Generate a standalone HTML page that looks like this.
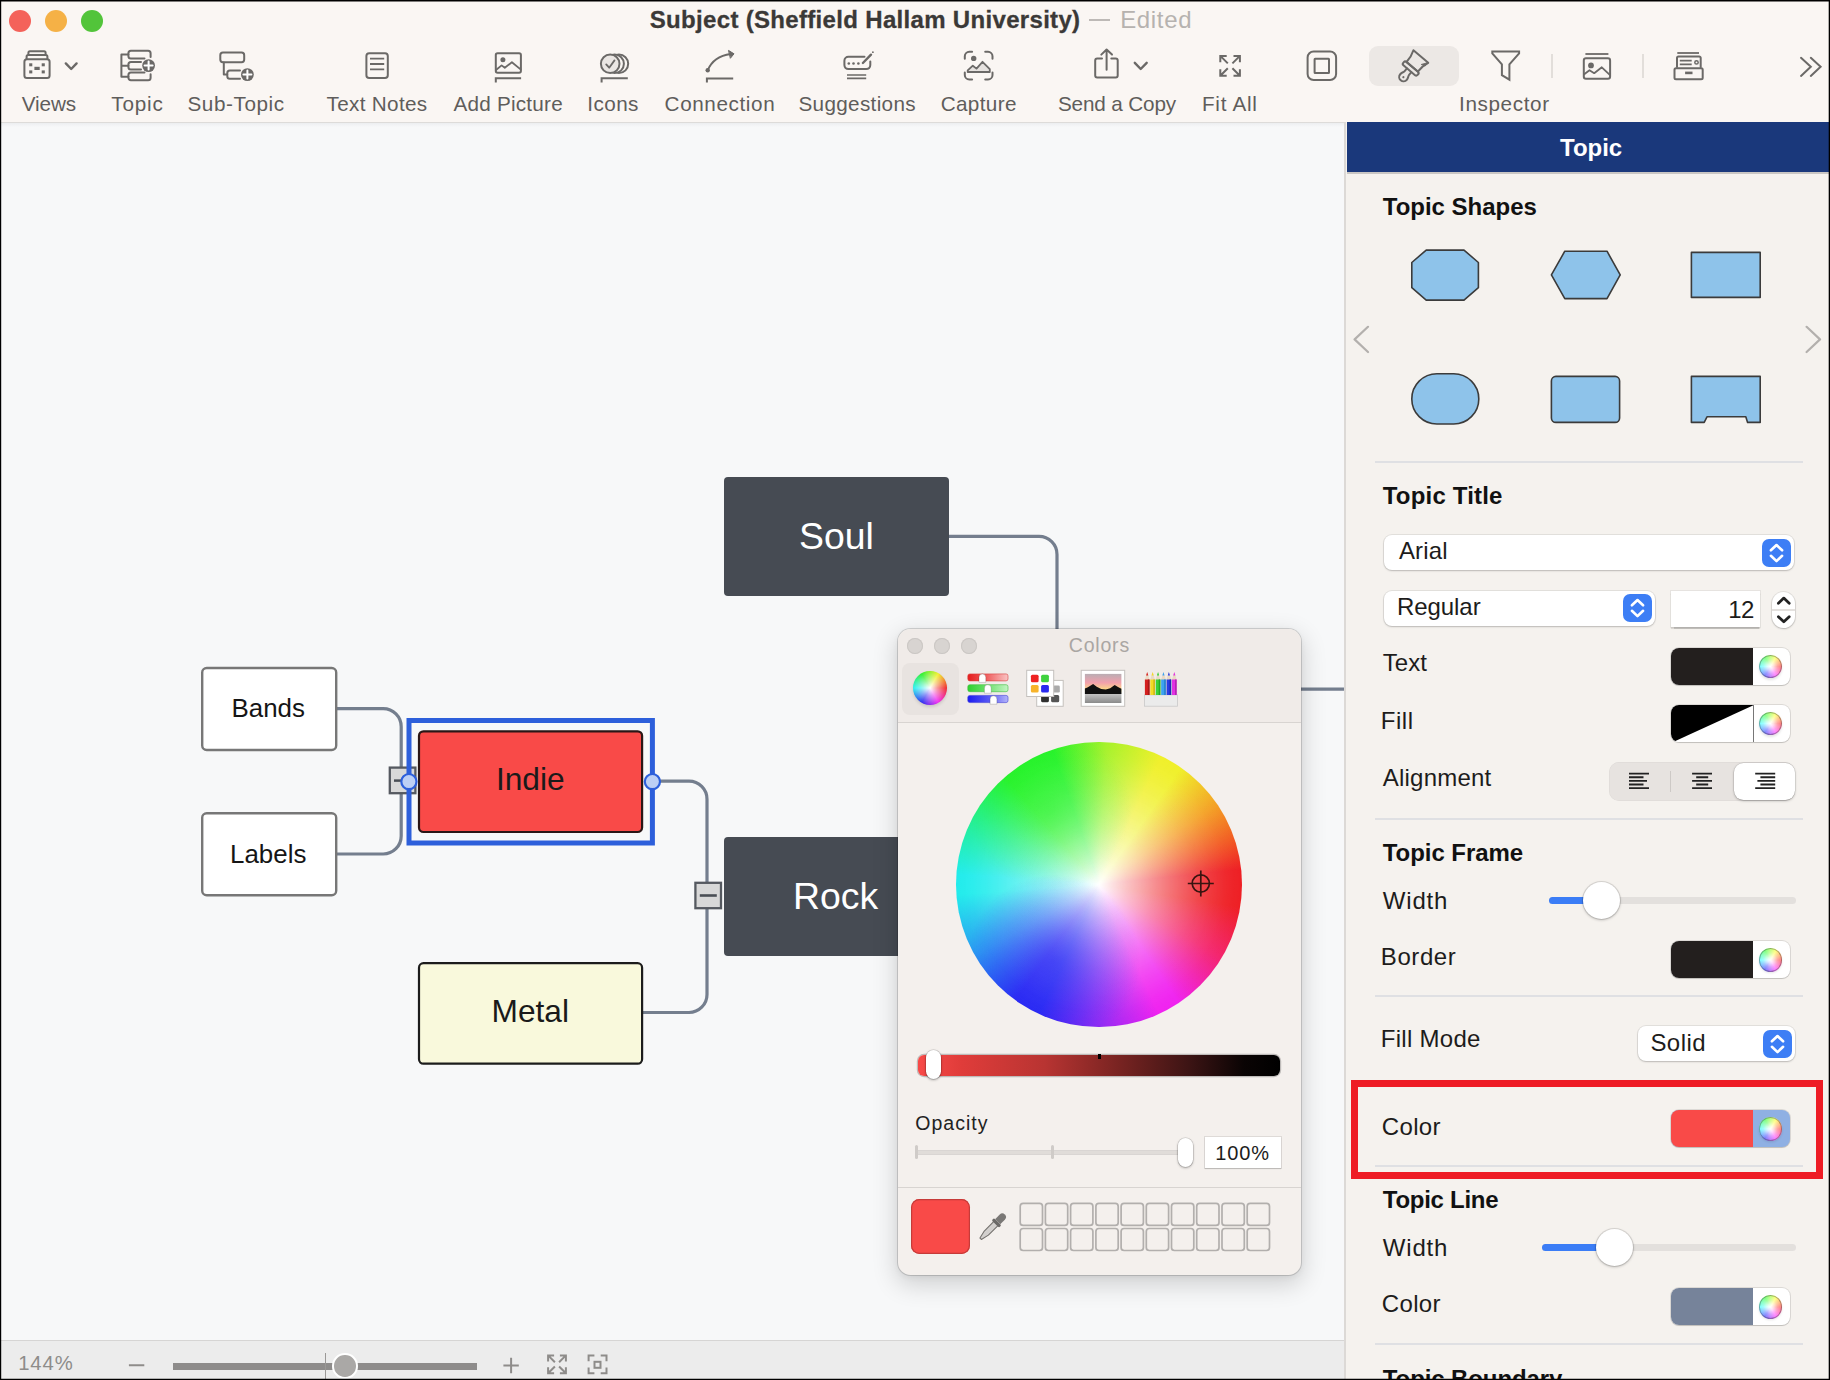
<!DOCTYPE html>
<html>
<head>
<meta charset="utf-8">
<title>Subject (Sheffield Hallam University)</title>
<style>
*{box-sizing:border-box;margin:0;padding:0}
html,body{width:1830px;height:1380px;overflow:hidden;background:#faf6f3}
body{font-family:"Liberation Sans",sans-serif;position:relative}
#app{position:absolute;left:0;top:0;width:1830px;height:1380px;overflow:hidden;background:#faf6f3}
.abs{position:absolute}
.t{position:absolute;white-space:nowrap;line-height:1}
/* toolbar */
#toolbar{position:absolute;left:0;top:0;width:1830px;height:122px;background:#faf6f3}
.tl{position:absolute;top:10px;width:22px;height:22px;border-radius:50%}
.tbl{position:absolute;white-space:nowrap;line-height:1;font-size:20.7px;color:#5f5d5b;top:93.600px}
.ico{position:absolute;overflow:visible}
.ico *{vector-effect:none}
/* canvas */
#canvas{position:absolute;left:0;top:122px;width:1344px;height:1218px;background:linear-gradient(#eceef0 0,#eceef0 1px,#f7f8f9 5px),#f7f8f9;overflow:hidden}
#status{position:absolute;left:0;top:1339.500px;width:1344px;height:41px;background:#ececec;border-top:1.500px solid #d6d5d4}
/* inspector */
#insp{position:absolute;left:1344px;top:122px;width:486px;height:1258px;background:#f5f2ee;border-left:2.200px solid #dcd9d6;overflow:hidden}
#insphead{position:absolute;left:0.500px;top:0;width:484px;height:50px;background:#1a387b}
.h{position:absolute;white-space:nowrap;line-height:1;font-weight:bold;font-size:23.5px;color:#111;left:1383px}
.l{position:absolute;white-space:nowrap;line-height:1;font-size:24px;color:#1d1c1b;left:1383px}
.sep{position:absolute;left:1375px;width:428px;height:2px;background:#dfe0e3}
.well{position:absolute;left:1671px;width:119.400px;height:37px;border-radius:8px;background:#fff;box-shadow:0 0 0 1px rgba(0,0,0,.10),0 1px 1px rgba(0,0,0,.12);overflow:hidden}
.well .c{position:absolute;left:0;top:0;width:82px;height:37px}
.well .w{position:absolute;left:87px;top:6px;width:24px;height:24px}
.dd{position:absolute;height:35px;border-radius:8px;background:#fff;box-shadow:0 0 0 1px rgba(0,0,0,.07),0 1px 2px rgba(0,0,0,.18)}
.dd .tx{position:absolute;left:15px;top:5px;font-size:24px;line-height:1;color:#1d1c1b;white-space:nowrap}
.dd .st{position:absolute;right:3px;top:4px;width:28px;height:27px;border-radius:6px;background:#3b7df6}
.track{position:absolute;height:7px;border-radius:4px;background:#e3e0dd}
.trackb{position:absolute;height:7px;border-radius:4px;background:#3b7df6}
.knob{position:absolute;width:37px;height:37px;border-radius:50%;background:#fff;box-shadow:0 0 0 1px rgba(0,0,0,.10),0 1px 3px rgba(0,0,0,.25)}
.wh{border-radius:50%;background:radial-gradient(circle closest-side,#fff 0%,rgba(255,255,255,.85) 25%,rgba(255,255,255,.55) 60%,rgba(255,255,255,.32) 100%),conic-gradient(from 90deg,#f33,#f3f,#33f,#3ff,#3f3,#ff3,#f33);box-shadow:inset 0 0 0 1px rgba(70,70,70,.42)}
/* popup */
#pop{position:absolute;left:897.700px;top:628.500px;width:403.800px;height:646.300px;border-radius:12.500px;background:#f4f0ed;box-shadow:0 0 0 1px rgba(0,0,0,.14),0 8px 24px 2px rgba(0,0,0,.16),0 2px 6px rgba(0,0,0,.06);overflow:hidden}
</style>
</head>
<body>
<div id="app">

<!-- TOOLBAR -->
<div id="toolbar">
  <div class="tl" style="left:9px;background:#f4625a"></div>
  <div class="tl" style="left:45px;background:#f5b146"></div>
  <div class="tl" style="left:81px;background:#52c43a"></div>
  <div class="t" id="title" style="-webkit-text-stroke:0.300px #3b3937;letter-spacing:0.32px;left:649.8px;top:7.8px;font-size:24px;font-weight:bold;color:#3b3937">Subject (Sheffield Hallam University)</div>
  <div class="t" id="title2" style="letter-spacing:0.65px;left:1120.2px;top:7.8px;font-size:24px;color:#b6b2af">Edited</div>
  <div class="abs" style="left:1089px;top:18.5px;width:20.5px;height:2.6px;background:#bdb9b6"></div>
  <div class="tbl" id="tb0" style="letter-spacing:-0.10px;left:21.8px">Views</div>
  <div class="tbl" id="tb1" style="letter-spacing:0.80px;left:111.3px">Topic</div>
  <div class="tbl" id="tb2" style="letter-spacing:0.57px;left:187.5px">Sub-Topic</div>
  <div class="tbl" id="tb3" style="letter-spacing:0.31px;left:326.6px">Text Notes</div>
  <div class="tbl" id="tb4" style="letter-spacing:0.22px;left:453.5px">Add Picture</div>
  <div class="tbl" id="tb5" style="letter-spacing:0.45px;left:587.2px">Icons</div>
  <div class="tbl" id="tb6" style="letter-spacing:0.60px;left:664.6px">Connection</div>
  <div class="tbl" id="tb7" style="letter-spacing:0.32px;left:798.5px">Suggestions</div>
  <div class="tbl" id="tb8" style="letter-spacing:0.36px;left:940.7px">Capture</div>
  <div class="tbl" id="tb9" style="letter-spacing:-0.14px;left:1057.9px">Send a Copy</div>
  <div class="tbl" id="tb10" style="letter-spacing:0.70px;left:1202.0px">Fit All</div>
  <div class="tbl" id="tb11" style="letter-spacing:0.63px;left:1459.0px">Inspector</div>
  <div class="abs" style="left:1368.5px;top:46px;width:90px;height:40px;border-radius:9px;background:#ece8e5"></div>
  <div class="abs" style="left:1550.5px;top:54px;width:2px;height:24px;background:#e2deda"></div>
  <div class="abs" style="left:1642px;top:54px;width:2px;height:24px;background:#e2deda"></div>
  <svg class="abs" style="left:0;top:0" width="1830" height="122" viewBox="0 0 1830 122" fill="none" stroke="#6b6967" stroke-width="2" stroke-linecap="round" stroke-linejoin="round">
    <!-- Views -->
    <rect x="24.4" y="59.3" width="25.2" height="18.8" rx="2.5"/>
    <path d="M26.6 58.8v-2.2a1.6 1.6 0 0 1 1.6-1.6h17.6a1.6 1.6 0 0 1 1.6 1.6v2.2"/>
    <path d="M28.4 54.6v-1.8a1.5 1.5 0 0 1 1.5-1.5h14.2a1.5 1.5 0 0 1 1.5 1.5v1.8"/>
    <g fill="#6b6967" stroke="none"><rect x="29.2" y="63.3" width="3.1" height="3"/><rect x="41.7" y="63.3" width="3.1" height="3"/><rect x="29.2" y="70.4" width="3.1" height="3"/><rect x="41.7" y="70.4" width="3.1" height="3"/><rect x="34.4" y="66.8" width="5.3" height="3.2"/></g>
    <path d="M65.8 63.4l5.4 5.6 5.4-5.6" stroke-width="2.4"/>
    <!-- Topic -->
    <path d="M128.4 54.5h-7v22.3h7M121.4 65.7h7"/>
    <path d="M144.5 58.4h-13.6a2.5 2.5 0 0 1-2.5-2.5v-2.6a2.5 2.5 0 0 1 2.5-2.5h17.2a2.5 2.5 0 0 1 2.5 2.5v3.6"/>
    <path d="M141 61.9h-10.100a2.500 2.500 0 0 0-2.500 2.500v2.600a2.500 2.500 0 0 0 2.500 2.500h10.100"/>
    <path d="M144.5 72.400h-13.600a2.500 2.500 0 0 0-2.500 2.500v2.900a2.500 2.500 0 0 0 2.500 2.500h17.200a2.500 2.500 0 0 0 2.500-2.500v-3.600"/>
    <circle cx="148.600" cy="65.600" r="6.400" fill="#6b6967" stroke="none"/>
    <path d="M148.600 61.600v8M144.600 65.600h8" stroke="#fff" stroke-width="2"/>
    <!-- Sub-Topic -->
    <rect x="220.300" y="52.600" width="23.900" height="9.600" rx="2.600"/>
    <path d="M223.800 62.400v12.200h3.400"/>
    <path d="M240 70.400h-10.200a2.500 2.500 0 0 0-2.500 2.500v3.300a2.500 2.500 0 0 0 2.500 2.500h10.200"/>
    <circle cx="247.400" cy="74.600" r="6.400" fill="#6b6967" stroke="none"/>
    <path d="M247.400 70.600v8M243.400 74.600h8" stroke="#fff" stroke-width="2"/>
    <!-- Text Notes -->
    <rect x="366.400" y="53.300" width="21.400" height="24.700" rx="2.800"/>
    <path d="M370 58.600h14.200M370 64h14.200M370 69.400h14.200" stroke-width="1.800" stroke-linecap="butt"/>
    <!-- Add Picture -->
    <rect x="495.800" y="53.300" width="25.100" height="19.500" rx="1.800"/>
    <circle cx="502.900" cy="59.800" r="2.500" fill="#6b6967" stroke="none"/>
    <path d="M496.300 69.800l5.300-4.400 3.200 2.400 7.100-5.600 8.700 7.200" stroke-width="1.800"/>
    <path d="M495.800 82.400v-4.200h25.300" stroke-linecap="butt" stroke-linejoin="miter"/>
    <!-- Icons -->
    <circle cx="618.900" cy="63.800" r="9.300"/>
    <circle cx="614.600" cy="63.800" r="9.300" fill="#faf6f3"/>
    <circle cx="610.200" cy="63.800" r="9.300" fill="#eae6e3"/>
    <path d="M606.200 64.400l3 3.300 5.300-7.300" stroke-width="1.800"/>
    <path d="M601.600 82.400v-4.200h26.200" stroke-linecap="butt" stroke-linejoin="miter"/>
    <!-- Connection -->
    <circle cx="707.700" cy="70.300" r="2.200" fill="#6b6967" stroke="none"/>
    <path d="M707.700 70.300c3.500-8.500 10-14.500 23-16.300"/>
    <path d="M728.800 50.600l5.200 3.200-3.400 4.200z" fill="#6b6967" stroke-width="1"/>
    <path d="M706.900 82.600v-4.200h26.300" stroke-linecap="butt" stroke-linejoin="miter"/>
    <!-- Suggestions -->
    <path d="M864.500 56.700h-16.100a4 4 0 0 0-4 4v4.400a4 4 0 0 0 4 4h17.900a4 4 0 0 0 4-4v-3.600"/>
    <g fill="#6b6967" stroke="none"><circle cx="848.800" cy="63.500" r="1.300"/><circle cx="853.500" cy="63.500" r="1.300"/><circle cx="858.400" cy="63.500" r="1.300"/></g>
    <path d="M862.900 63l8.100-8.300" stroke-width="2.400"/>
    <circle cx="872.900" cy="52.200" r="0.900" fill="#6b6967" stroke="none"/>
    <path d="M847 75h19.200M847 78.400h19.200" stroke-width="1.700" stroke-linecap="butt"/>
    <!-- Capture -->
    <path d="M964.800 58.800v-2.500a4.500 4.500 0 0 1 4.500-4.500h2.800M985.200 51.800h2.800a4.500 4.500 0 0 1 4.500 4.500v2.500M992.500 72.400v2.500a4.500 4.500 0 0 1-4.500 4.500h-2.800M972.100 79.400h-2.800a4.500 4.500 0 0 1-4.500-4.500v-2.500"/>
    <circle cx="973.700" cy="58.400" r="2.700" fill="#6b6967" stroke="none"/>
    <path d="M967.700 72v-1.600l5.100-4.700 3.700 2.900 6-6.800 7.300 7.400v2.800z" fill="#e6e2df" stroke-width="1.800"/>
    <!-- Send a copy -->
    <path d="M1102 58.500h-4.800a2 2 0 0 0-2 2v15.100a2 2 0 0 0 2 2h18.500a2 2 0 0 0 2-2v-15.100a2 2 0 0 0-2-2h-4.400"/>
    <path d="M1106.600 69.800v-19.800M1101.300 54.600l5.300-5.100 5.400 5.100"/>
    <path d="M1134.800 62.800l5.900 6.200 6-6.200" stroke-width="2.400"/>
    <!-- Fit All -->
    <g stroke-linecap="butt" stroke-linejoin="miter">
    <path d="M1220.300 62.300v-6.400h6.400M1220.800 56.400l7 7"/>
    <path d="M1233.500 55.900h6.400v6.400M1239.400 56.400l-7 7"/>
    <path d="M1239.900 69.300v6.400h-6.400M1239.400 75.200l-7-7"/>
    <path d="M1226.700 75.700h-6.400v-6.400M1220.800 75.200l7-7"/>
    </g>
    <!-- Square -->
    <rect x="1307.600" y="51.500" width="28.500" height="28.500" rx="6"/>
    <rect x="1314.600" y="58.800" width="14.400" height="14.200" rx="0.500"/>
    <!-- Brush -->
    <g transform="translate(1410.800 68.400) rotate(40.300)">
      <path d="M-7.400 -2.100c0.300-4.800-0.400-8.800-2.300-13.400h19.400c-1.900 4.600-2.600 8.600-2.300 13.400z"/>
      <rect x="-9.400" y="-2.100" width="18.800" height="4.500" rx="1.800"/>
      <path d="M-2.900 2.500v3.600c0 1.600-1.400 2.500-1.400 5.200a4.300 4.300 0 0 0 8.600 0c0-2.700-1.400-3.600-1.400-5.200v-3.600"/>
      <circle cx="0" cy="11.500" r="1.100" fill="#6b6967" stroke="none"/>
      <path d="M8.600 -14.500l-3.200 4.800 3.600-1.300z" fill="#6b6967" stroke-width="0.800"/>
    </g>
    <!-- Funnel -->
    <path d="M1492.300 51.400h26.800v2l-9.700 10.900v15.400l-7.500-4.600v-10.800l-9.600-10.900z" stroke-linejoin="miter"/>
    <!-- Image -->
    <path d="M1585.400 54h23" stroke-linecap="butt" stroke-width="1.800"/>
    <rect x="1583.800" y="58.200" width="26.300" height="20.500" rx="2.200"/>
    <circle cx="1591" cy="65.400" r="2.900" fill="#6b6967" stroke="none"/>
    <path d="M1584.200 74.300l5.300-4.100 4.700 3 7.600-5.900 8 7.600" stroke-width="1.800"/>
    <!-- Drawer -->
    <path d="M1677.300 53h21.700" stroke-linecap="butt" stroke-width="1.800"/>
    <path d="M1677 67v-8.900a1.500 1.500 0 0 1 1.500-1.500h20.700a1.500 1.500 0 0 1 1.500 1.500v8.900"/>
    <path d="M1679.800 60.700h11.900M1679.800 64.300h11.900" stroke-width="1.700" stroke-linecap="butt"/>
    <circle cx="1696.500" cy="62.400" r="1.700" stroke-width="1.500"/>
    <rect x="1674.500" y="68.300" width="28.200" height="11" rx="1.500"/>
    <path d="M1685.100 72.900h7.400" stroke-width="2.600" stroke-linecap="butt"/>
    <!-- >> -->
    <path d="M1801 57.800l9.800 8.900-9.800 9.200M1810.800 57.800l9.800 8.900-9.800 9.200" stroke-linejoin="miter"/>
  </svg>
</div>

<!-- CANVAS -->
<div id="canvas">
<svg class="abs" style="left:0;top:0" width="1345" height="1218" viewBox="0 122 1345 1218" fill="none">
<g stroke="#747e8e" stroke-width="3.200" fill="none" stroke-linecap="butt">
<path d="M337 708.700h46.200a18 18 0 0 1 18 18v109.300a18 18 0 0 1-18 18h-46.200"/>
<path d="M653 781.200h36a18 18 0 0 1 18 18v195.300a18 18 0 0 1-18 18h-46"/>
<path d="M949 536.400h90a18 18 0 0 1 18 18v80"/>
<path d="M1295 689.200h50"/>
</g>
<!-- collapse buttons -->
<rect x="389.800" y="767.600" width="25.600" height="25.600" fill="#d8d8d8" stroke="#555960" stroke-width="2.300"/>
<path d="M394 780.600h8" stroke="#4a4e55" stroke-width="2.500"/>
<rect x="695.400" y="882.800" width="25.600" height="25.400" fill="#d8d8d8" stroke="#555960" stroke-width="2.300"/>
<path d="M699.800 895.500h17" stroke="#4a4e55" stroke-width="2.600"/>
<!-- nodes -->
<rect x="724" y="477" width="225" height="119" rx="4" fill="#464b53"/>
<rect x="724" y="837" width="225" height="119" rx="4" fill="#464b53"/>
<rect x="202.200" y="668" width="134" height="82" rx="4.500" fill="#fff" stroke="#777" stroke-width="2.400"/>
<rect x="202.200" y="813.200" width="134" height="82" rx="4.500" fill="#fff" stroke="#777" stroke-width="2.400"/>
<rect x="409" y="720.500" width="243.400" height="122.500" fill="none" stroke="#2d5fdb" stroke-width="5"/>
<rect x="419" y="731.300" width="223.100" height="100.700" rx="4.500" fill="#f94a48" stroke="#2a1616" stroke-width="2.200"/>
<rect x="419" y="963.200" width="223.100" height="100.500" rx="4.500" fill="#f9f9dc" stroke="#1c1c1c" stroke-width="2.200"/>
<circle cx="408.900" cy="781.600" r="7.600" fill="#bccff5" stroke="#2d5fdb" stroke-width="2.200"/>
<circle cx="652.400" cy="781.600" r="7.600" fill="#bccff5" stroke="#2d5fdb" stroke-width="2.200"/>
</svg>
<div class="t" id="n0" style="left:724px;width:225px;text-align:center;top:395.7px;font-size:37.4px;color:#fff">Soul</div>
<div class="t" id="n1" style="left:723.0px;width:225px;text-align:center;top:755.7px;font-size:37.4px;color:#fff">Rock</div>
<div class="t" id="n2" style="left:200.2px;width:136px;text-align:center;top:573.8px;font-size:25.9px;color:#151515">Bands</div>
<div class="t" id="n3" style="left:200.2px;width:136px;text-align:center;top:719.7px;font-size:25.9px;color:#151515">Labels</div>
<div class="t" id="n4" style="left:417.8px;width:225px;text-align:center;top:642.4px;font-size:31.7px;color:#1a1a1a">Indie</div>
<div class="t" id="n5" style="left:417.8px;width:225px;text-align:center;top:874.3px;font-size:31.7px;color:#1a1a1a">Metal</div>
</div>
<div class="abs" style="left:0;top:122px;width:1344px;height:1px;background:#dddbd9"></div>
<div id="status">
<div class="abs" style="left:0;top:-1339.500px;width:1345px;height:1380px">
<div class="t" id="sz" style="letter-spacing:0.90px;left:18.2px;top:1352.4px;font-size:20.3px;color:#8e8c8a">144%</div>
<div class="abs" style="left:172.800px;top:1362.100px;width:304px;height:6.700px;background:#8e8c8b"></div>
<div class="abs" style="left:325.300px;top:1352px;width:1.200px;height:28px;background:#9a9896"></div>
<div class="abs" style="left:332.100px;top:1352.400px;width:25.600px;height:25.600px;border-radius:50%;background:#aaa8a6;border:2px solid #fff"></div>
<svg class="abs" style="left:120px;top:1345px" width="500" height="35" viewBox="120 1345 500 35" fill="none" stroke="#8e8c8a" stroke-width="2">
<path d="M128.900 1364.300h15.400M503.400 1364.500h15.400M511.100 1356.800v15.400"/>
<g stroke-linecap="butt" stroke-linejoin="miter">
<path d="M548.100 1360.400v-6h6M548.600 1354.900l6.300 6.300"/>
<path d="M559.900 1354.400h6v6M565.400 1354.900l-6.300 6.300"/>
<path d="M565.900 1366.300v6h-6M565.400 1371.800l-6.300-6.300"/>
<path d="M554.100 1372.300h-6v-6M548.600 1371.800l6.300-6.300"/>
<path d="M588.600 1360.200v-5.800h5.800M600.700 1354.400h5.800v5.800M606.500 1366.500v5.800h-5.800M594.400 1372.300h-5.800v-5.800"/>
<rect x="594.500" y="1360.800" width="6" height="6"/>
</g>
</svg>
</div>
</div>

<!-- INSPECTOR -->
<div id="insp">
  <div id="insphead"></div>
</div>
<div class="t" id="ih" style="letter-spacing:0.00px;left:1560.0px;top:135.7px;font-size:24px;font-weight:bold;color:#fff">Topic</div>
<div class="abs" style="left:1347px;top:172px;width:483px;height:2px;background:#c9c6c3"></div>
<div class="h" id="hh0" style="letter-spacing:-0.02px;left:1382.8px;top:194.7px;font-size:24px">Topic Shapes</div>
<div class="h" id="hh1" style="letter-spacing:0.18px;left:1382.8px;top:483.9px;font-size:24px">Topic Title</div>
<div class="h" id="hh2" style="letter-spacing:-0.06px;left:1382.8px;top:840.6px;font-size:24px">Topic Frame</div>
<div class="h" id="hh3" style="letter-spacing:-0.27px;left:1382.8px;top:1187.6px;font-size:24px">Topic Line</div>
<div class="h" id="hh4" style="letter-spacing:-0.10px;left:1382.8px;top:1366.7px;font-size:24px">Topic Boundary</div>
<div class="l" id="ll0" style="letter-spacing:0.07px;left:1382.8px;top:651.2px">Text</div>
<div class="l" id="ll1" style="letter-spacing:0.53px;left:1380.8px;top:708.7px">Fill</div>
<div class="l" id="ll2" style="letter-spacing:0.21px;left:1382.8px;top:766.3px">Alignment</div>
<div class="l" id="ll3" style="letter-spacing:0.80px;left:1382.8px;top:889.3px">Width</div>
<div class="l" id="ll4" style="letter-spacing:0.58px;left:1380.8px;top:945px">Border</div>
<div class="l" id="ll5" style="letter-spacing:0.28px;left:1380.8px;top:1027.4px">Fill Mode</div>
<div class="l" id="ll6" style="letter-spacing:0.35px;left:1381.8px;top:1115.3px">Color</div>
<div class="l" id="ll7" style="letter-spacing:0.80px;left:1382.8px;top:1236.3px">Width</div>
<div class="l" id="ll8" style="letter-spacing:0.35px;left:1381.8px;top:1292px">Color</div>
<div class="sep" style="top:461.2px"></div>
<div class="sep" style="top:817.8px"></div>
<div class="sep" style="top:995px"></div>
<div class="sep" style="top:1164.6px"></div>
<div class="sep" style="top:1342.6px"></div>
<svg class="abs" style="left:1346px;top:174px" width="484" height="290" viewBox="1346 174 484 290" fill="#8ec3ea" stroke="#3b3b3b" stroke-width="1.600" stroke-linejoin="round">
<path d="M1426.200 250.100h37.800l14.400 12.400v25.200l-14.400 12.400h-37.800l-14.400-12.400v-25.200z"/>
<path d="M1564.800 251.200h42.200l13.200 23.700-13.200 23.700h-42.200l-13.400-23.700z"/>
<rect x="1691.400" y="252.400" width="68.800" height="45"/>
<rect x="1411.800" y="373.800" width="67" height="50.200" rx="25.100"/>
<rect x="1551.400" y="376.400" width="68.200" height="46" rx="4.500"/>
<path d="M1691.400 376.400h68.800v46h-12.600l-1.800-5.600h-38.800l-2.800 5.600h-12.800z"/>
<path d="M1368 326.800l-13.400 12.600 13.400 12.600M1806.600 326.800l13.400 12.600-13.400 12.600" fill="none" stroke="#b3b0ad" stroke-width="2.200" stroke-linecap="round"/>
</svg>
<div class="dd" style="left:1383.5px;top:535px;width:410.500px"></div><svg class="abs" style="left:1761.5px;top:538.7px" width="29" height="28" viewBox="0 0 29 28"><rect x="0" y="0" width="29" height="28" rx="7" fill="#3d7ef5"/><path d="M8.900 11.300l5.600-5.300 5.600 5.300M8.900 16.800l5.600 5.300 5.600-5.300" fill="none" stroke="#fff" stroke-width="2.600" stroke-linecap="round" stroke-linejoin="round"/></svg>
<div class="t" id="d0" style="letter-spacing:0.17px;left:1398.9px;top:539.3px;font-size:24px;color:#1d1c1b">Arial</div>
<div class="dd" style="left:1383.5px;top:591px;width:271.700px"></div><svg class="abs" style="left:1623px;top:594.2px" width="29" height="28" viewBox="0 0 29 28"><rect x="0" y="0" width="29" height="28" rx="7" fill="#3d7ef5"/><path d="M8.900 11.300l5.600-5.300 5.600 5.300M8.900 16.800l5.600 5.300 5.600-5.300" fill="none" stroke="#fff" stroke-width="2.600" stroke-linecap="round" stroke-linejoin="round"/></svg>
<div class="t" id="d1" style="letter-spacing:-0.05px;left:1396.9px;top:595px;font-size:24px;color:#1d1c1b">Regular</div>
<div class="abs" style="left:1671.200px;top:590.600px;width:88.800px;height:36.700px;background:#fff;box-shadow:0 0 0 1px rgba(0,0,0,.06),0 1.500px 1px rgba(0,0,0,.22)"></div>
<div class="t" id="d2" style="letter-spacing:-0.60px;left:1728.2px;top:597.7px;font-size:24px;color:#1d1c1b">12</div>
<div class="abs" style="left:1771.700px;top:591.800px;width:23.800px;height:36px;border-radius:12px;background:#fff;box-shadow:0 0 0 1px rgba(0,0,0,.07),0 1px 2px rgba(0,0,0,.2)"></div>
<div class="abs" style="left:1771.700px;top:609px;width:23.800px;height:1.500px;background:#e4e1de"></div>
<svg class="abs" style="left:1771px;top:591px" width="26" height="38" viewBox="1771 591 26 38" fill="none" stroke="#222" stroke-width="2.800" stroke-linecap="round" stroke-linejoin="round"><path d="M1778.400 603.200l5.400-5.100 5.400 5.100M1778.400 616.700l5.400 5.100 5.400-5.100"/></svg>
<div class="well" style="top:648.0px;background:#fff"><div class="c" style="background:#231f1e"></div></div><div class="abs" style="left:1758.5px;top:656.4px;width:23.6px;height:23.6px;border-radius:50%;background:rgba(0,0,0,.10);filter:blur(1.2px)"></div><div class="abs wh" style="left:1758.5px;top:654.9px;width:23.6px;height:23.6px"></div>
<div class="well" style="top:705.0px;background:#fff"><div class="c" style="background:#fff"><svg width="83" height="38" viewBox="0 0 83 38" style="position:absolute;left:0;top:0"><path d="M0 0h83L0 38z" fill="#000"/><path d="M82.500 0v38" stroke="#777" stroke-width="1"/></svg></div></div><div class="abs" style="left:1758.5px;top:713.4px;width:23.6px;height:23.6px;border-radius:50%;background:rgba(0,0,0,.10);filter:blur(1.2px)"></div><div class="abs wh" style="left:1758.5px;top:711.9px;width:23.6px;height:23.6px"></div>
<div class="well" style="top:941.2px;background:#fff"><div class="c" style="background:#231f1e"></div></div><div class="abs" style="left:1758.5px;top:949.6px;width:23.6px;height:23.6px;border-radius:50%;background:rgba(0,0,0,.10);filter:blur(1.2px)"></div><div class="abs wh" style="left:1758.5px;top:948.1px;width:23.6px;height:23.6px"></div>
<div class="well" style="top:1110.2px;background:#8fb0e3"><div class="c" style="background:#f94a48"></div></div><div class="abs" style="left:1758.5px;top:1118.6px;width:23.6px;height:23.6px;border-radius:50%;background:rgba(0,0,0,.10);filter:blur(1.2px)"></div><div class="abs wh" style="left:1758.5px;top:1117.1px;width:23.6px;height:23.6px"></div>
<div class="well" style="top:1288.2px;background:#fff"><div class="c" style="background:#76839a"></div></div><div class="abs" style="left:1758.5px;top:1296.6px;width:23.6px;height:23.6px;border-radius:50%;background:rgba(0,0,0,.10);filter:blur(1.2px)"></div><div class="abs wh" style="left:1758.5px;top:1295.1px;width:23.6px;height:23.6px"></div>
<div class="abs" style="left:1608.700px;top:762px;width:186px;height:39.400px;border-radius:10px;background:#e7e3e0;box-shadow:inset 0 0 0 0.500px rgba(0,0,0,.05)"></div>
<div class="abs" style="left:1734.200px;top:763.200px;width:60.400px;height:37px;border-radius:9.500px;background:#fff;box-shadow:0 0 0 0.500px rgba(0,0,0,.12),0 1px 2.500px rgba(0,0,0,.28)"></div>
<div class="abs" style="left:1670.200px;top:771px;width:1.200px;height:21px;background:#cdc9c6"></div>
<svg class="abs" style="left:1600px;top:760px" width="200" height="44" viewBox="1600 760 200 44" stroke="#222" stroke-width="1.900" fill="none"><path d="M1629 773.6H1649M1629 777.2H1643.5M1629 780.9H1647M1629 784.5H1643.5M1629 788.1H1649M1692.1 773.6H1712M1696.2 777.2H1708.2M1692.1 780.9H1712M1696.2 784.5H1708.2M1692.1 788.1H1712M1755.2 773.6H1775.2M1760.4 777.2H1775.2M1757.4 780.9H1775.2M1760.4 784.5H1775.2M1755.2 788.1H1775.2"/></svg>
<div class="track" style="left:1548.8px;top:897.1px;width:246.9px"></div><div class="trackb" style="left:1548.8px;top:897.1px;width:53.0px"></div><div class="knob" style="left:1583.4px;top:882.1px"></div>
<div class="track" style="left:1542.1px;top:1244.1px;width:253.6px"></div><div class="trackb" style="left:1542.1px;top:1244.1px;width:72.7px"></div><div class="knob" style="left:1596.4px;top:1229.1px"></div>
<div class="dd" style="left:1637.500px;top:1026.300px;width:157.700px"></div><svg class="abs" style="left:1763px;top:1029.6px" width="29" height="28" viewBox="0 0 29 28"><rect x="0" y="0" width="29" height="28" rx="7" fill="#3d7ef5"/><path d="M8.900 11.300l5.600-5.300 5.600 5.300M8.900 16.800l5.600 5.300 5.600-5.300" fill="none" stroke="#fff" stroke-width="2.600" stroke-linecap="round" stroke-linejoin="round"/></svg>
<div class="t" id="d3" style="letter-spacing:0.47px;left:1650.4px;top:1030.7px;font-size:24px;color:#1d1c1b">Solid</div>
<div class="abs" style="left:1351.200px;top:1080.300px;width:472px;height:99px;border:7.600px solid #ee1c25"></div>

<!-- POPUP -->
<div id="pop">
<div class="abs" style="left:-897.700px;top:-628.500px;width:1830px;height:1380px">
<div class="abs" style="left:897px;top:628px;width:406px;height:94.300px;background:#f0ebe8"></div>
<div class="abs" style="left:897px;top:721.600px;width:406px;height:1.600px;background:#d8d4d1"></div>
<div class="abs" style="left:906.7px;top:637.5px;width:16.400px;height:16.400px;border-radius:50%;background:#d8d4d1;box-shadow:inset 0 0 0 1px #cbc7c4"></div>
<div class="abs" style="left:933.7px;top:637.5px;width:16.400px;height:16.400px;border-radius:50%;background:#d8d4d1;box-shadow:inset 0 0 0 1px #cbc7c4"></div>
<div class="abs" style="left:960.8px;top:637.5px;width:16.400px;height:16.400px;border-radius:50%;background:#d8d4d1;box-shadow:inset 0 0 0 1px #cbc7c4"></div>
<div class="t" id="pt" style="letter-spacing:0.80px;left:1068.8px;top:635.7px;font-size:19.5px;color:#aaa6a3">Colors</div>
<div class="abs" style="left:901.700px;top:662.900px;width:57.400px;height:52.400px;border-radius:8px;background:#e8e3e0"></div>
<div class="abs" style="left:913.200px;top:672.600px;width:34px;height:34px;border-radius:50%;background:rgba(0,0,0,.12);filter:blur(1.500px)"></div>
<div class="abs" style="left:912.700px;top:670.600px;width:34.800px;height:34.800px;border-radius:50%;background:radial-gradient(circle closest-side,#fff 0%,rgba(255,255,255,.5) 45%,rgba(255,255,255,0) 100%),conic-gradient(from 90deg,#f02a2a,#f02af0,#2a2af0,#2af0f0,#2af02a,#f0f02a,#f02a2a)"></div>
<svg class="abs" style="left:960px;top:664px" width="230" height="50" viewBox="960 664 230 50">
<defs>
<linearGradient id="gr" x1="0" x2="1"><stop offset="0" stop-color="#e51c1c"/><stop offset=".45" stop-color="#ef5a5a"/><stop offset="1" stop-color="#f9c4c4"/></linearGradient>
<linearGradient id="gg" x1="0" x2="1"><stop offset="0" stop-color="#2fd02f"/><stop offset=".5" stop-color="#6fe06f"/><stop offset="1" stop-color="#c4f4c4"/></linearGradient>
<linearGradient id="gb" x1="0" x2="1"><stop offset="0" stop-color="#1c1cf0"/><stop offset=".55" stop-color="#5a5af4"/><stop offset="1" stop-color="#b4b4fa"/></linearGradient>
<linearGradient id="sky" x1="0" y1="0" x2="0" y2="1"><stop offset="0" stop-color="#b9aeb4"/><stop offset=".3" stop-color="#f2a0ac"/><stop offset=".52" stop-color="#fbd58a"/><stop offset=".6" stop-color="#f6e9a0"/><stop offset=".66" stop-color="#c9c9c9"/><stop offset="1" stop-color="#8a8a8a"/></linearGradient>
</defs>
<rect x="967.800" y="673.900" width="40.200" height="7" rx="2" fill="url(#gr)" stroke="#d84040" stroke-width=".6"/>
<rect x="967.800" y="684.700" width="40.200" height="7" rx="2" fill="url(#gg)" stroke="#40c040" stroke-width=".6"/>
<rect x="967.800" y="695.400" width="40.200" height="7.200" rx="2" fill="url(#gb)" stroke="#4040d8" stroke-width=".6"/>
<g fill="#fff" stroke="rgba(0,0,0,.25)" stroke-width=".7">
<path d="M979 682.400v-5a3.400 3.400 0 0 1 6.800 0v5z"/>
<path d="M984.400 693.200v-5a3.400 3.400 0 0 1 6.800 0v5z"/>
<path d="M990.100 704.200v-5a3.400 3.400 0 0 1 6.800 0v5z"/>
</g>
<!-- palette -->
<rect x="1036.700" y="680.400" width="26.500" height="25.900" fill="#fff" stroke="#c4c0bd" stroke-width="1"/>
<rect x="1053.200" y="685.600" width="6.600" height="7" rx="1.300" fill="#aaa"/>
<rect x="1041.100" y="694.900" width="7.800" height="7.300" rx="1.500" fill="#303030"/>
<rect x="1051.100" y="694.900" width="8.100" height="7.300" rx="1.500" fill="#555"/>
<rect x="1026.700" y="670.300" width="27" height="26.200" fill="#fff" stroke="#c4c0bd" stroke-width="1"/>
<rect x="1030.900" y="674.700" width="7.700" height="7.500" rx="1.500" fill="#ee2222"/>
<rect x="1041.100" y="674.700" width="7.800" height="7.500" rx="1.500" fill="#3fd23f"/>
<rect x="1030.900" y="685" width="7.700" height="7.400" rx="1.500" fill="#f7b32a"/>
<rect x="1041.100" y="685" width="7.800" height="7.400" rx="1.500" fill="#2a2af0"/>
<!-- image -->
<rect x="1081.200" y="670.300" width="43.500" height="36" fill="#fff" stroke="#c4c0bd" stroke-width="1"/>
<rect x="1084.900" y="673.900" width="36.500" height="29.100" fill="url(#sky)"/>
<path d="M1084.900 694v-5.500l3-1.200 5.200-3.300 3.600 2.700 4.500 2.300 4.600 0.600 4.400-1.400 4.500-3.100 3.300 1.900 3.400 1.800v5.200z" fill="#111"/>
<!-- pencils -->
<g>
<rect x="1144.400" y="694.900" width="33.200" height="11.300" fill="#ebebeb" stroke="#c8c8c8" stroke-width=".8"/>
<path d="M1144.90 694.900v-15.400l2.300-7.600 2.300 7.600v15.400z" fill="#ead9c2"/>
<path d="M1144.90 694.900v-15.400h4.600v15.400z" fill="#d42020"/>
<path d="M1147.90 694.900v-15.400h1.600v15.400z" fill="#a81818"/>
<path d="M1146.10 675.600l1.100-3.700 1.100 3.700z" fill="#d42020"/>
<path d="M1150.32 694.900v-15.400l2.300-7.600 2.300 7.600v15.400z" fill="#ead9c2"/>
<path d="M1150.32 694.900v-15.400h4.600v15.400z" fill="#f2da24"/>
<path d="M1153.32 694.900v-15.400h1.600v15.400z" fill="#d0b418"/>
<path d="M1151.52 675.600l1.100-3.700 1.100 3.700z" fill="#f2da24"/>
<path d="M1155.74 694.900v-15.400l2.300-7.600 2.300 7.600v15.400z" fill="#ead9c2"/>
<path d="M1155.74 694.900v-15.400h4.600v15.400z" fill="#3ad23a"/>
<path d="M1158.74 694.900v-15.400h1.600v15.400z" fill="#28a828"/>
<path d="M1156.94 675.600l1.100-3.700 1.100 3.700z" fill="#3ad23a"/>
<path d="M1161.16 694.900v-15.400l2.300-7.600 2.300 7.600v15.400z" fill="#ead9c2"/>
<path d="M1161.16 694.900v-15.400h4.600v15.400z" fill="#3aa2f2"/>
<path d="M1164.16 694.900v-15.400h1.600v15.400z" fill="#2a80cc"/>
<path d="M1162.36 675.600l1.100-3.700 1.100 3.700z" fill="#3aa2f2"/>
<path d="M1166.58 694.900v-15.400l2.300-7.600 2.300 7.600v15.400z" fill="#ead9c2"/>
<path d="M1166.58 694.900v-15.400h4.600v15.400z" fill="#2a3ae2"/>
<path d="M1169.58 694.900v-15.400h1.600v15.400z" fill="#1c28b0"/>
<path d="M1167.78 675.600l1.100-3.700 1.100 3.700z" fill="#2a3ae2"/>
<path d="M1172.00 694.900v-15.400l2.300-7.600 2.300 7.600v15.400z" fill="#ead9c2"/>
<path d="M1172.00 694.900v-15.400h4.600v15.400z" fill="#e232e2"/>
<path d="M1175.00 694.900v-15.400h1.600v15.400z" fill="#b424b4"/>
<path d="M1173.20 675.600l1.100-3.700 1.100 3.700z" fill="#e232e2"/>
</g>
</svg>
<div class="abs" style="left:956px;top:741.900px;width:285.500px;height:285.500px;border-radius:50%;background:radial-gradient(circle at 34% 77%,rgba(42,42,244,.5) 0,rgba(42,42,244,.25) 14%,rgba(42,42,244,0) 30%),radial-gradient(circle at 33% 24%,rgba(39,243,43,.35) 0,rgba(39,243,43,.15) 14%,rgba(39,243,43,0) 28%),radial-gradient(circle closest-side,rgba(255,255,255,1) 0%,rgba(255,255,255,0.93) 5%,rgba(255,255,255,0.86) 10%,rgba(255,255,255,0.73) 20%,rgba(255,255,255,0.61) 30%,rgba(255,255,255,0.49) 40%,rgba(255,255,255,0.38) 50%,rgba(255,255,255,0.28) 60%,rgba(255,255,255,0.185) 70%,rgba(255,255,255,0.105) 80%,rgba(255,255,255,0.04) 90%,rgba(255,255,255,0) 100%),conic-gradient(from 90deg,#ee1f24 0deg,#ee1f24 9deg,#f4246e 31deg,#f022f0 56deg,#f022f0 65deg,#8a2af4 92deg,#2a2af4 115deg,#2a2af4 126deg,#2a96f2 150deg,#22ecec 176deg,#22ecec 184deg,#24f08e 208deg,#27f32b 229deg,#27f32b 251deg,#a6f22a 273deg,#f0f02a 296deg,#f0f02a 305deg,#f4a024 326deg,#f25c22 341deg,#ee1f24 354deg,#ee1f24 360deg)"></div>
<svg class="abs" style="left:1185px;top:868px" width="32" height="32" viewBox="1185 868 32 32" fill="none" stroke="#3a1410" stroke-width="1.700"><circle cx="1200.800" cy="883.500" r="8.600"/><path d="M1187.800 883.500h26M1200.800 870.500v26"/></svg>
<div class="abs" style="left:918px;top:1054.600px;width:362.200px;height:21.200px;border-radius:6px;background:linear-gradient(90deg,#f84a48 0%,#e03c3a 12%,#b83432 35%,#7a2422 55%,#3c1414 75%,#0a0404 90%,#000 100%);box-shadow:0 0 0 1.200px rgba(0,0,0,.22)"></div>
<div class="abs" style="left:1098px;top:1053.600px;width:3px;height:5px;background:#000"></div>
<div class="abs" style="left:925.500px;top:1049.800px;width:15px;height:29.200px;border-radius:7.500px;background:#fff;box-shadow:0 0 0 .6px rgba(0,0,0,.18),0 1px 2.500px rgba(0,0,0,.35)"></div>
<div class="t" id="po" style="letter-spacing:1.02px;left:915.3px;top:1113.9px;font-size:19.5px;color:#222">Opacity</div>
<div class="abs" style="left:916px;top:1149.800px;width:270px;height:5.400px;border-radius:2.700px;background:#e0dcd9;box-shadow:inset 0 0 0 .6px rgba(0,0,0,.06)"></div>
<div class="abs" style="left:914.600px;top:1145.400px;width:3px;height:14px;border-radius:1.500px;background:#cfcbc8"></div>
<div class="abs" style="left:1051.200px;top:1145.400px;width:3px;height:14px;border-radius:1.500px;background:#cfcbc8"></div>
<div class="abs" style="left:1178.200px;top:1138.300px;width:15.200px;height:28.800px;border-radius:7.600px;background:#fff;box-shadow:0 0 0 .6px rgba(0,0,0,.16),0 1px 2.500px rgba(0,0,0,.32)"></div>
<div class="abs" style="left:1205.400px;top:1136.600px;width:76px;height:31.600px;background:#fff;box-shadow:0 0 0 1px rgba(0,0,0,.09),0 1px 1px rgba(0,0,0,.14)"></div>
<div class="t" id="pp" style="letter-spacing:0.87px;left:1215.3px;top:1143px;font-size:20px;color:#1c1c1c">100%</div>
<div class="abs" style="left:897px;top:1186.600px;width:406px;height:1.600px;background:#d8d4d1"></div>
<div class="abs" style="left:911px;top:1199.200px;width:58.500px;height:55.300px;border-radius:8.500px;background:#f94a48;box-shadow:inset 0 0 0 1.200px #c63b39"></div>
<svg class="abs" style="left:976px;top:1210px" width="34" height="34" viewBox="976 1210 34 34"><g transform="translate(992.400 1227) rotate(45)">
<path d="M-2.900 -5h5.800v13.600l-1.900 8h-2l-1.900-8z" fill="#d2cfcd" stroke="#75726f" stroke-width="1.100" stroke-linejoin="round"/>
<rect x="-5.200" y="-7.400" width="10.400" height="3.200" rx="1.300" fill="#6b6967"/>
<path d="M-3.600 -7.400v-6.600a3.600 3.600 0 0 1 7.200 0v6.600z" fill="#7a7876"/>
</g></svg>
<svg class="abs" style="left:1015px;top:1198px" width="270" height="58" viewBox="1015 1198 270 58" fill="none" stroke="#b2afad" stroke-width="1.700"><rect x="1020.2" y="1203.4" width="22.300" height="22" rx="3"/><rect x="1045.4" y="1203.4" width="22.300" height="22" rx="3"/><rect x="1070.6" y="1203.4" width="22.300" height="22" rx="3"/><rect x="1095.9" y="1203.4" width="22.300" height="22" rx="3"/><rect x="1121.1" y="1203.4" width="22.300" height="22" rx="3"/><rect x="1146.3" y="1203.4" width="22.300" height="22" rx="3"/><rect x="1171.5" y="1203.4" width="22.300" height="22" rx="3"/><rect x="1196.7" y="1203.4" width="22.300" height="22" rx="3"/><rect x="1222.0" y="1203.4" width="22.300" height="22" rx="3"/><rect x="1247.2" y="1203.4" width="22.300" height="22" rx="3"/><rect x="1020.2" y="1228.5" width="22.300" height="22" rx="3"/><rect x="1045.4" y="1228.5" width="22.300" height="22" rx="3"/><rect x="1070.6" y="1228.5" width="22.300" height="22" rx="3"/><rect x="1095.9" y="1228.5" width="22.300" height="22" rx="3"/><rect x="1121.1" y="1228.5" width="22.300" height="22" rx="3"/><rect x="1146.3" y="1228.5" width="22.300" height="22" rx="3"/><rect x="1171.5" y="1228.5" width="22.300" height="22" rx="3"/><rect x="1196.7" y="1228.5" width="22.300" height="22" rx="3"/><rect x="1222.0" y="1228.5" width="22.300" height="22" rx="3"/><rect x="1247.2" y="1228.5" width="22.300" height="22" rx="3"/></svg>
</div>
</div>

<!-- outer frame -->
<svg class="abs" style="left:0;top:0" width="1830" height="1380" viewBox="0 0 1830 1380"><path d="M0 0h1830v1380h-1830zM1.200 1.400v1377.300h1827.500v-1377.300z" fill="#000" fill-rule="evenodd"/></svg>
</div>
</body>
</html>
